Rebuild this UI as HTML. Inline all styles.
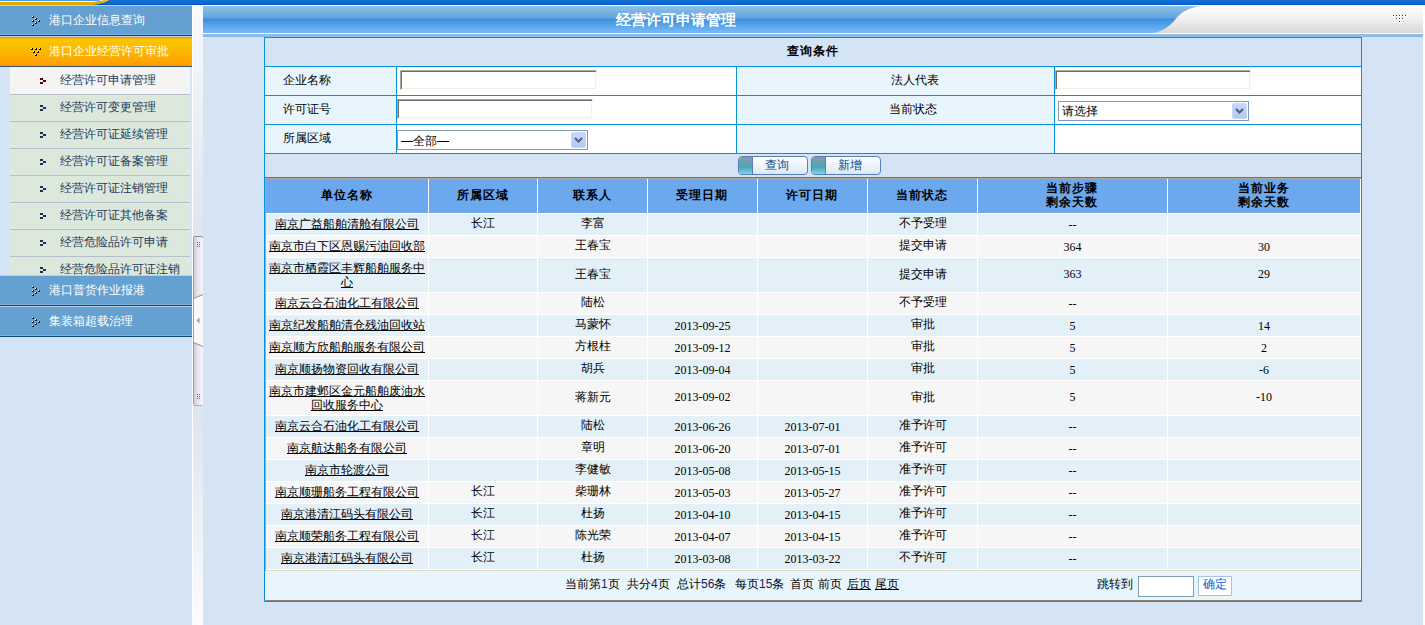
<!DOCTYPE html>
<html><head><meta charset="utf-8">
<style>
*{margin:0;padding:0;box-sizing:border-box}
html,body{width:1425px;height:625px;overflow:hidden}
body{position:relative;font-weight:500;background:#d4e4f4;font-family:"Liberation Sans",sans-serif;font-size:12px;color:#000}
.a{position:absolute}
/* top bar */
#topbar{left:0;top:0;width:1425px;height:5px;background:linear-gradient(#1470d2,#0a66d0 70%,#0055c8)}
#rstrip{left:1423px;top:5px;width:2px;height:620px;background:#fff}
/* sidebar */
#side{left:0;top:5px;width:192px;height:620px;background:#d4e4f4}
.mh{position:absolute;left:0;width:192px;height:31px;border-top:1px solid #c4ccd8;background:#64a0d0}
.mh:after{content:"";position:absolute;left:0;right:0;bottom:0;height:1px;border-top:1px solid #78b4e8;background:#10487e}
.mh .t{position:absolute;left:49px;top:0;line-height:28px;color:#fff;font-size:12px;white-space:nowrap}
.mh.or{border-top:1px solid #c8ccd0;background:linear-gradient(#f0a000 0,#f0a000 1px,#fcc600 2px,#fbb800 45%,#ff9c00 100%)}
.mh.or:after{height:1px;border-top:0;background:#404c64}
.sub{position:absolute;left:10px;width:180px;height:27px;background:#dce8dc;border-bottom:1px solid #b4c0cc}
.sub.sel{background:#f4f4f4}
.sub .t{position:absolute;left:50px;top:-1px;line-height:26px;color:#223a60;white-space:nowrap}
.sub i{position:absolute;left:30px;width:3px;height:2px;background:#1e2e50}
.sel i{background:#600000}
/* splitter */
#split{left:192px;top:5px;width:11px;height:620px;border-left:1px solid #fff;background:linear-gradient(#f8f9fc 0%,#dde5ee 38%,#dde5ee 66%,#fbfcfe 100%)}
/* title */
#title{left:203px;top:5px;width:1220px;height:32px;border-top:1px solid #fff;background:linear-gradient(#8ec0e6 0px,#62a6e0 12px,#3a90dc 13px,#58a6ec 20px,#78b8f8 26px,#78b8f8 27px,#fff 27px,#fff 28px,#8ec0e6 28px,#88bce4 31px)}
#ttext{left:616px;top:12px;width:122px;color:#fff;font-weight:bold;font-size:15px;line-height:16px;white-space:nowrap}
.c{display:flex;align-items:center;justify-content:center;text-align:center;white-space:nowrap}
.l{display:flex;align-items:center;white-space:nowrap}
.n{font-family:"Liberation Serif",serif}
.nb{color:#1a1a60}
u{text-decoration:underline}
</style></head>
<body>
<div id="topbar" class="a"></div>
<svg class="a" style="left:0;top:0" width="130" height="5" viewBox="0 0 130 5">
  <rect x="0" y="0" width="104" height="1" fill="#4a9ae0"/>
  <path d="M0 1 H94 Q99 0.8 102 0 H106 Q100 1.6 94 2 H0 Z" fill="#fff"/>
  <path d="M0 2 H94 Q101 1.6 106 0 H109 Q103 3.5 93 5 H0 Z" fill="#e0aa00"/>
  <path d="M101 1.2 Q104 0.4 106 0 H109 Q106 1.8 102 3 Z" fill="#f8c000"/>
</svg>

<div id="side" class="a"></div>
<div class="mh" style="top:5px"><svg class="a" style="left:32px;top:11px" width="10" height="10"></svg><span class="t">港口企业信息查询</span></div>
<div class="mh or" style="top:36px"><span class="t">港口企业经营许可审批</span></div>
<div class="a" style="left:0;top:67px;width:192px;height:208px;overflow:hidden"><div class="a" style="left:10px;top:0;width:180px;height:1px;background:#f4f4f4"></div>
  <div class="sub sel" style="top:1px"><i style="top:10px"></i><i style="left:33px;top:12px"></i><i style="top:14px"></i><span class="t">经营许可申请管理</span></div>
  <div class="sub" style="top:28px"><i style="top:10px"></i><i style="left:33px;top:12px"></i><i style="top:14px"></i><span class="t">经营许可变更管理</span></div>
  <div class="sub" style="top:55px"><i style="top:10px"></i><i style="left:33px;top:12px"></i><i style="top:14px"></i><span class="t">经营许可证延续管理</span></div>
  <div class="sub" style="top:82px"><i style="top:10px"></i><i style="left:33px;top:12px"></i><i style="top:14px"></i><span class="t">经营许可证备案管理</span></div>
  <div class="sub" style="top:109px"><i style="top:10px"></i><i style="left:33px;top:12px"></i><i style="top:14px"></i><span class="t">经营许可证注销管理</span></div>
  <div class="sub" style="top:136px"><i style="top:10px"></i><i style="left:33px;top:12px"></i><i style="top:14px"></i><span class="t">经营许可证其他备案</span></div>
  <div class="sub" style="top:163px"><i style="top:10px"></i><i style="left:33px;top:12px"></i><i style="top:14px"></i><span class="t">经营危险品许可申请</span></div>
  <div class="sub" style="top:190px"><i style="top:10px"></i><i style="left:33px;top:12px"></i><i style="top:14px"></i><span class="t">经营危险品许可证注销</span></div>
</div>
<div class="mh" style="top:275px"><span class="t">港口普货作业报港</span></div>
<div class="mh" style="top:306px"><span class="t">集装箱超载治理</span></div>

<div id="split" class="a"></div>

<div id="title" class="a"></div>
<div id="ttext" class="a">经营许可申请管理</div>
<div class="a" style="left:32px;top:16px;width:2px;height:2px;background:#141838"></div><div class="a" style="left:32px;top:16px;width:1px;height:1px;background:#fff"></div>
<div class="a" style="left:35px;top:18px;width:2px;height:2px;background:#141838"></div><div class="a" style="left:35px;top:18px;width:1px;height:1px;background:#fff"></div>
<div class="a" style="left:32px;top:20px;width:2px;height:2px;background:#141838"></div><div class="a" style="left:32px;top:20px;width:1px;height:1px;background:#fff"></div>
<div class="a" style="left:38px;top:20px;width:2px;height:2px;background:#141838"></div><div class="a" style="left:38px;top:20px;width:1px;height:1px;background:#fff"></div>
<div class="a" style="left:35px;top:22px;width:2px;height:2px;background:#141838"></div><div class="a" style="left:35px;top:22px;width:1px;height:1px;background:#fff"></div>
<div class="a" style="left:32px;top:24px;width:2px;height:2px;background:#141838"></div><div class="a" style="left:32px;top:24px;width:1px;height:1px;background:#fff"></div>
<div class="a" style="left:32px;top:286px;width:2px;height:2px;background:#141838"></div><div class="a" style="left:32px;top:286px;width:1px;height:1px;background:#fff"></div>
<div class="a" style="left:35px;top:288px;width:2px;height:2px;background:#141838"></div><div class="a" style="left:35px;top:288px;width:1px;height:1px;background:#fff"></div>
<div class="a" style="left:32px;top:290px;width:2px;height:2px;background:#141838"></div><div class="a" style="left:32px;top:290px;width:1px;height:1px;background:#fff"></div>
<div class="a" style="left:38px;top:290px;width:2px;height:2px;background:#141838"></div><div class="a" style="left:38px;top:290px;width:1px;height:1px;background:#fff"></div>
<div class="a" style="left:35px;top:292px;width:2px;height:2px;background:#141838"></div><div class="a" style="left:35px;top:292px;width:1px;height:1px;background:#fff"></div>
<div class="a" style="left:32px;top:294px;width:2px;height:2px;background:#141838"></div><div class="a" style="left:32px;top:294px;width:1px;height:1px;background:#fff"></div>
<div class="a" style="left:32px;top:317px;width:2px;height:2px;background:#141838"></div><div class="a" style="left:32px;top:317px;width:1px;height:1px;background:#fff"></div>
<div class="a" style="left:35px;top:319px;width:2px;height:2px;background:#141838"></div><div class="a" style="left:35px;top:319px;width:1px;height:1px;background:#fff"></div>
<div class="a" style="left:32px;top:321px;width:2px;height:2px;background:#141838"></div><div class="a" style="left:32px;top:321px;width:1px;height:1px;background:#fff"></div>
<div class="a" style="left:38px;top:321px;width:2px;height:2px;background:#141838"></div><div class="a" style="left:38px;top:321px;width:1px;height:1px;background:#fff"></div>
<div class="a" style="left:35px;top:323px;width:2px;height:2px;background:#141838"></div><div class="a" style="left:35px;top:323px;width:1px;height:1px;background:#fff"></div>
<div class="a" style="left:32px;top:325px;width:2px;height:2px;background:#141838"></div><div class="a" style="left:32px;top:325px;width:1px;height:1px;background:#fff"></div>
<div class="a" style="left:31px;top:48px;width:2px;height:2px;background:#000"></div><div class="a" style="left:31px;top:48px;width:1px;height:1px;background:#fff"></div>
<div class="a" style="left:35px;top:48px;width:2px;height:2px;background:#000"></div><div class="a" style="left:35px;top:48px;width:1px;height:1px;background:#fff"></div>
<div class="a" style="left:39px;top:48px;width:2px;height:2px;background:#000"></div><div class="a" style="left:39px;top:48px;width:1px;height:1px;background:#fff"></div>
<div class="a" style="left:33px;top:51px;width:2px;height:2px;background:#000"></div><div class="a" style="left:33px;top:51px;width:1px;height:1px;background:#fff"></div>
<div class="a" style="left:37px;top:51px;width:2px;height:2px;background:#000"></div><div class="a" style="left:37px;top:51px;width:1px;height:1px;background:#fff"></div>
<div class="a" style="left:35px;top:54px;width:2px;height:2px;background:#000"></div><div class="a" style="left:35px;top:54px;width:1px;height:1px;background:#fff"></div>
<svg class="a" style="left:203px;top:6px" width="1220" height="27" viewBox="0 0 1220 27"><defs><linearGradient id="gg" x1="0" y1="0" x2="0" y2="1"><stop offset="0" stop-color="#ffffff"/><stop offset="0.35" stop-color="#f4f4f4"/><stop offset="1" stop-color="#d9d9d9"/></linearGradient></defs><path d="M998.5 0 C991.5 0.5 980 4 973.5 12 C968 19.5 959.5 25.5 951 27 L1220 27 L1220 0 Z" fill="url(#gg)"/></svg>
<div class="a" style="left:1393px;top:15px;width:2px;height:2px;background:#fff"></div><div class="a" style="left:1393px;top:15px;width:1px;height:1px;background:#3a3a3a"></div>
<div class="a" style="left:1396px;top:15px;width:2px;height:2px;background:#fff"></div><div class="a" style="left:1396px;top:15px;width:1px;height:1px;background:#3a3a3a"></div>
<div class="a" style="left:1399px;top:15px;width:2px;height:2px;background:#fff"></div><div class="a" style="left:1399px;top:15px;width:1px;height:1px;background:#3a3a3a"></div>
<div class="a" style="left:1402px;top:15px;width:2px;height:2px;background:#fff"></div><div class="a" style="left:1402px;top:15px;width:1px;height:1px;background:#3a3a3a"></div>
<div class="a" style="left:1405px;top:15px;width:2px;height:2px;background:#fff"></div><div class="a" style="left:1405px;top:15px;width:1px;height:1px;background:#3a3a3a"></div>
<div class="a" style="left:1396px;top:18px;width:2px;height:2px;background:#fff"></div><div class="a" style="left:1396px;top:18px;width:1px;height:1px;background:#3a3a3a"></div>
<div class="a" style="left:1399px;top:18px;width:2px;height:2px;background:#fff"></div><div class="a" style="left:1399px;top:18px;width:1px;height:1px;background:#3a3a3a"></div>
<div class="a" style="left:1402px;top:18px;width:2px;height:2px;background:#fff"></div><div class="a" style="left:1402px;top:18px;width:1px;height:1px;background:#3a3a3a"></div>
<div class="a" style="left:1399px;top:21px;width:2px;height:2px;background:#fff"></div><div class="a" style="left:1399px;top:21px;width:1px;height:1px;background:#3a3a3a"></div>
<svg class="a" style="left:193px;top:230px" width="11" height="180" viewBox="0 0 11 180" shape-rendering="crispEdges"><defs><linearGradient id="kg" x1="0" y1="0" x2="1" y2="0"><stop offset="0" stop-color="#c6c4da"/><stop offset="0.45" stop-color="#e4e4ee"/><stop offset="1" stop-color="#f6f6fa"/></linearGradient></defs><path d="M0 9 Q0 6 5 6 Q10 6 10 8 L10 174 Q10 176 5 176 Q0 176 0 173 Z" fill="url(#kg)"/><path d="M1 68 L10 64 L10 117 L1 113 Z" fill="#f9f9fc"/><rect x="0" y="8" width="1" height="166" fill="#9c9ab8"/><rect x="1" y="6" width="8" height="1" fill="#8e8cac"/><rect x="0" y="7" width="1" height="1" fill="#8e8cac"/><rect x="9" y="7" width="1" height="1" fill="#8e8cac"/><rect x="1" y="175" width="8" height="1" fill="#a8a6c2"/></svg>
<svg class="a" style="left:193px;top:230px" width="11" height="180" viewBox="0 0 11 180"><path d="M0.5 68.5 L10 64.5 M0.5 112.5 L10 116.5" stroke="#8c8aa8" stroke-width="1" fill="none"/><path d="M3.5 90.5 L6.5 87.5 L6.5 93.5 Z" fill="#9896b4"/><rect x="4" y="12" width="1" height="1" fill="#6a6890"/><rect x="6" y="12" width="1" height="1" fill="#6a6890"/><rect x="4" y="14" width="1" height="1" fill="#6a6890"/><rect x="6" y="14" width="1" height="1" fill="#6a6890"/><rect x="4" y="16" width="1" height="1" fill="#6a6890"/><rect x="6" y="16" width="1" height="1" fill="#6a6890"/><rect x="4" y="164" width="1" height="1" fill="#6a6890"/><rect x="6" y="164" width="1" height="1" fill="#6a6890"/><rect x="4" y="166" width="1" height="1" fill="#6a6890"/><rect x="6" y="166" width="1" height="1" fill="#6a6890"/><rect x="4" y="168" width="1" height="1" fill="#6a6890"/><rect x="6" y="168" width="1" height="1" fill="#6a6890"/></svg>
<div class="a" style="left:264px;top:37px;width:1098px;height:565px;border:1px solid #0891d5;background:#d4e4f4"></div>
<div class="a c" style="left:265px;top:37px;width:1096px;height:28px;font-weight:bold;letter-spacing:1px;padding-right:1px"><div>查询条件</div></div>
<div class="a" style="left:265px;top:67px;width:131px;height:28px;background:#e8f5fd"></div>
<div class="a" style="left:397px;top:67px;width:339px;height:28px;background:#fff"></div>
<div class="a" style="left:737px;top:67px;width:317px;height:28px;background:#e8f5fd"></div>
<div class="a" style="left:1055px;top:67px;width:306px;height:28px;background:#fff"></div>
<div class="a" style="left:265px;top:96px;width:131px;height:28px;background:#e8f5fd"></div>
<div class="a" style="left:397px;top:96px;width:339px;height:28px;background:#fff"></div>
<div class="a" style="left:737px;top:96px;width:317px;height:28px;background:#e8f5fd"></div>
<div class="a" style="left:1055px;top:96px;width:306px;height:28px;background:#fff"></div>
<div class="a" style="left:265px;top:125px;width:131px;height:28px;background:#e8f5fd"></div>
<div class="a" style="left:397px;top:125px;width:339px;height:28px;background:#fff"></div>
<div class="a" style="left:737px;top:125px;width:317px;height:28px;background:#e8f5fd"></div>
<div class="a" style="left:1055px;top:125px;width:306px;height:28px;background:#fff"></div>
<div class="a" style="left:265px;top:66px;width:1096px;height:1px;background:#0891d5"></div>
<div class="a" style="left:265px;top:95px;width:1096px;height:1px;background:#0891d5"></div>
<div class="a" style="left:265px;top:124px;width:1096px;height:1px;background:#0891d5"></div>
<div class="a" style="left:265px;top:153px;width:1096px;height:1px;background:#0891d5"></div>
<div class="a" style="left:265px;top:177px;width:1096px;height:1px;background:#0891d5"></div>
<div class="a" style="left:396px;top:66px;width:1px;height:88px;background:#0891d5"></div>
<div class="a" style="left:736px;top:66px;width:1px;height:88px;background:#0891d5"></div>
<div class="a" style="left:1054px;top:66px;width:1px;height:88px;background:#0891d5"></div>
<div class="a l" style="left:283px;top:67px;width:100px;height:28px;padding-bottom:2px"><div>企业名称</div></div>
<div class="a l" style="left:283px;top:96px;width:100px;height:28px;padding-bottom:2px"><div>许可证号</div></div>
<div class="a l" style="left:283px;top:125px;width:100px;height:28px;padding-bottom:2px"><div>所属区域</div></div>
<div class="a l" style="left:891px;top:67px;width:100px;height:28px;padding-bottom:2px"><div>法人代表</div></div>
<div class="a l" style="left:889px;top:96px;width:100px;height:28px;padding-bottom:2px"><div>当前状态</div></div>
<div class="a" style="left:400px;top:70px;width:197px;height:20px;background:#fff;border-top:1px solid #aca899;border-left:1px solid #aca899;border-right:1px solid #fff;border-bottom:1px solid #fff;box-shadow:inset 1px 1px 0 #716f64,inset -1px -1px 0 #f1efe2"></div>
<div class="a" style="left:1055px;top:70px;width:196px;height:20px;background:#fff;border-top:1px solid #aca899;border-left:1px solid #aca899;border-right:1px solid #fff;border-bottom:1px solid #fff;box-shadow:inset 1px 1px 0 #716f64,inset -1px -1px 0 #f1efe2"></div>
<div class="a" style="left:397px;top:99px;width:196px;height:20px;background:#fff;border-top:1px solid #aca899;border-left:1px solid #aca899;border-right:1px solid #fff;border-bottom:1px solid #fff;box-shadow:inset 1px 1px 0 #716f64,inset -1px -1px 0 #f1efe2"></div>
<div class="a" style="left:397px;top:130px;width:191px;height:20px;background:#fff;border:1px solid #7f9db9"></div>
<div class="a l" style="left:401px;top:131px;width:171px;height:20px;"><div><span style="color:#000">—全部—</span></div></div>
<div class="a" style="left:571px;top:132px;width:15px;height:16px;border-radius:2px;background:linear-gradient(#c6d6fc,#b4c8f4);border:1px solid #c8d8f8"></div>
<svg class="a" style="left:571px;top:132px" width="15" height="16"><path d="M4 6.0 L7.5 9.5 L11 6.0" stroke="#4d6185" stroke-width="2" fill="none"/></svg>
<div class="a" style="left:1058px;top:101px;width:191px;height:20px;background:#fff;border:1px solid #7f9db9"></div>
<div class="a l" style="left:1062px;top:101px;width:171px;height:20px;"><div>请选择</div></div>
<div class="a" style="left:1232px;top:103px;width:15px;height:16px;border-radius:2px;background:linear-gradient(#c6d6fc,#b4c8f4);border:1px solid #c8d8f8"></div>
<svg class="a" style="left:1232px;top:103px" width="15" height="16"><path d="M4 6.0 L7.5 9.5 L11 6.0" stroke="#4d6185" stroke-width="2" fill="none"/></svg>
<div class="a" style="left:738px;top:156px;width:70px;height:19px;border:1px solid #5a7cc0;border-radius:4px;overflow:hidden;background:linear-gradient(#ffffff,#dde8f6)"><div class="a" style="left:0;top:0;width:14px;height:100%;background:linear-gradient(#8a9aa6,#4aa8b8 60%,#78d8e8);border-right:1px solid #5a7cc0"></div><div class="a c" style="left:8px;top:0;right:0;height:100%;color:#0c4c84;padding-bottom:1px"><div>查询</div></div></div>
<div class="a" style="left:811px;top:156px;width:70px;height:19px;border:1px solid #5a7cc0;border-radius:4px;overflow:hidden;background:linear-gradient(#ffffff,#dde8f6)"><div class="a" style="left:0;top:0;width:14px;height:100%;background:linear-gradient(#8a9aa6,#4aa8b8 60%,#78d8e8);border-right:1px solid #5a7cc0"></div><div class="a c" style="left:8px;top:0;right:0;height:100%;color:#0c4c84;padding-bottom:1px"><div>新增</div></div></div>
<div class="a" style="left:265px;top:178px;width:1096px;height:393px;background:#fff;border-left:1px solid #b0a898;border-top:1px solid #b0a898;border-bottom:1px solid #e4dcc8"></div>
<div class="a" style="left:266px;top:179px;width:162px;height:34px;background:#6ca8ee"></div>
<div class="a c" style="left:266px;top:179px;width:162px;height:34px;font-weight:bold;letter-spacing:1px;padding-right:1px;line-height:14px;padding-bottom:2px"><div>单位名称</div></div>
<div class="a" style="left:429px;top:179px;width:108px;height:34px;background:#6ca8ee"></div>
<div class="a c" style="left:429px;top:179px;width:108px;height:34px;font-weight:bold;letter-spacing:1px;padding-right:1px;line-height:14px;padding-bottom:2px"><div>所属区域</div></div>
<div class="a" style="left:538px;top:179px;width:109px;height:34px;background:#6ca8ee"></div>
<div class="a c" style="left:538px;top:179px;width:109px;height:34px;font-weight:bold;letter-spacing:1px;padding-right:1px;line-height:14px;padding-bottom:2px"><div>联系人</div></div>
<div class="a" style="left:648px;top:179px;width:109px;height:34px;background:#6ca8ee"></div>
<div class="a c" style="left:648px;top:179px;width:109px;height:34px;font-weight:bold;letter-spacing:1px;padding-right:1px;line-height:14px;padding-bottom:2px"><div>受理日期</div></div>
<div class="a" style="left:758px;top:179px;width:109px;height:34px;background:#6ca8ee"></div>
<div class="a c" style="left:758px;top:179px;width:109px;height:34px;font-weight:bold;letter-spacing:1px;padding-right:1px;line-height:14px;padding-bottom:2px"><div>许可日期</div></div>
<div class="a" style="left:868px;top:179px;width:109px;height:34px;background:#6ca8ee"></div>
<div class="a c" style="left:868px;top:179px;width:109px;height:34px;font-weight:bold;letter-spacing:1px;padding-right:1px;line-height:14px;padding-bottom:2px"><div>当前状态</div></div>
<div class="a" style="left:978px;top:179px;width:189px;height:34px;background:#6ca8ee"></div>
<div class="a c" style="left:978px;top:179px;width:189px;height:34px;font-weight:bold;letter-spacing:1px;padding-right:1px;line-height:14px;padding-bottom:2px"><div>当前步骤<br>剩余天数</div></div>
<div class="a" style="left:1168px;top:179px;width:192px;height:34px;background:#6ca8ee"></div>
<div class="a c" style="left:1168px;top:179px;width:192px;height:34px;font-weight:bold;letter-spacing:1px;padding-right:1px;line-height:14px;padding-bottom:2px"><div>当前业务<br>剩余天数</div></div>
<div class="a" style="left:266px;top:214px;width:162px;height:21px;background:#e3f0f8"></div>
<div class="a c" style="left:266px;top:214px;width:162px;height:21px;line-height:14px;padding-bottom:2px"><div><u>南京广益船舶清舱有限公司</u></div></div>
<div class="a" style="left:429px;top:214px;width:108px;height:21px;background:#e3f0f8"></div>
<div class="a c" style="left:429px;top:214px;width:108px;height:21px;padding-bottom:2px"><div>长江</div></div>
<div class="a" style="left:538px;top:214px;width:109px;height:21px;background:#e3f0f8"></div>
<div class="a c" style="left:538px;top:214px;width:109px;height:21px;padding-bottom:2px"><div>李富</div></div>
<div class="a" style="left:648px;top:214px;width:109px;height:21px;background:#e3f0f8"></div>
<div class="a" style="left:758px;top:214px;width:109px;height:21px;background:#e3f0f8"></div>
<div class="a" style="left:868px;top:214px;width:109px;height:21px;background:#e3f0f8"></div>
<div class="a c" style="left:868px;top:214px;width:109px;height:21px;padding-bottom:2px"><div>不予受理</div></div>
<div class="a" style="left:978px;top:214px;width:189px;height:21px;background:#e3f0f8"></div>
<div class="a c n" style="left:978px;top:214px;width:189px;height:21px;padding-top:2px"><div>--</div></div>
<div class="a" style="left:1168px;top:214px;width:192px;height:21px;background:#e3f0f8"></div>
<div class="a" style="left:266px;top:236px;width:162px;height:21px;background:#f6f6f6"></div>
<div class="a c" style="left:266px;top:236px;width:162px;height:21px;line-height:14px;padding-bottom:2px"><div><u>南京市白下区恩赐污油回收部</u></div></div>
<div class="a" style="left:429px;top:236px;width:108px;height:21px;background:#f6f6f6"></div>
<div class="a" style="left:538px;top:236px;width:109px;height:21px;background:#f6f6f6"></div>
<div class="a c" style="left:538px;top:236px;width:109px;height:21px;padding-bottom:2px"><div>王春宝</div></div>
<div class="a" style="left:648px;top:236px;width:109px;height:21px;background:#f6f6f6"></div>
<div class="a" style="left:758px;top:236px;width:109px;height:21px;background:#f6f6f6"></div>
<div class="a" style="left:868px;top:236px;width:109px;height:21px;background:#f6f6f6"></div>
<div class="a c" style="left:868px;top:236px;width:109px;height:21px;padding-bottom:2px"><div>提交申请</div></div>
<div class="a" style="left:978px;top:236px;width:189px;height:21px;background:#f6f6f6"></div>
<div class="a c n" style="left:978px;top:236px;width:189px;height:21px;padding-top:2px"><div>364</div></div>
<div class="a" style="left:1168px;top:236px;width:192px;height:21px;background:#f6f6f6"></div>
<div class="a c n" style="left:1168px;top:236px;width:192px;height:21px;padding-top:2px"><div>30</div></div>
<div class="a" style="left:266px;top:258px;width:162px;height:34px;background:#e3f0f8"></div>
<div class="a c" style="left:266px;top:258px;width:162px;height:34px;line-height:14px"><div><u>南京市栖霞区丰辉船舶服务中</u><br><u>心</u></div></div>
<div class="a" style="left:429px;top:258px;width:108px;height:34px;background:#e3f0f8"></div>
<div class="a" style="left:538px;top:258px;width:109px;height:34px;background:#e3f0f8"></div>
<div class="a c" style="left:538px;top:258px;width:109px;height:34px;padding-bottom:2px"><div>王春宝</div></div>
<div class="a" style="left:648px;top:258px;width:109px;height:34px;background:#e3f0f8"></div>
<div class="a" style="left:758px;top:258px;width:109px;height:34px;background:#e3f0f8"></div>
<div class="a" style="left:868px;top:258px;width:109px;height:34px;background:#e3f0f8"></div>
<div class="a c" style="left:868px;top:258px;width:109px;height:34px;padding-bottom:2px"><div>提交申请</div></div>
<div class="a" style="left:978px;top:258px;width:189px;height:34px;background:#e3f0f8"></div>
<div class="a c n" style="left:978px;top:258px;width:189px;height:34px;padding-bottom:2px"><div>363</div></div>
<div class="a" style="left:1168px;top:258px;width:192px;height:34px;background:#e3f0f8"></div>
<div class="a c n" style="left:1168px;top:258px;width:192px;height:34px;padding-bottom:2px"><div>29</div></div>
<div class="a" style="left:266px;top:293px;width:162px;height:21px;background:#f6f6f6"></div>
<div class="a c" style="left:266px;top:293px;width:162px;height:21px;line-height:14px;padding-bottom:2px"><div><u>南京云合石油化工有限公司</u></div></div>
<div class="a" style="left:429px;top:293px;width:108px;height:21px;background:#f6f6f6"></div>
<div class="a" style="left:538px;top:293px;width:109px;height:21px;background:#f6f6f6"></div>
<div class="a c" style="left:538px;top:293px;width:109px;height:21px;padding-bottom:2px"><div>陆松</div></div>
<div class="a" style="left:648px;top:293px;width:109px;height:21px;background:#f6f6f6"></div>
<div class="a" style="left:758px;top:293px;width:109px;height:21px;background:#f6f6f6"></div>
<div class="a" style="left:868px;top:293px;width:109px;height:21px;background:#f6f6f6"></div>
<div class="a c" style="left:868px;top:293px;width:109px;height:21px;padding-bottom:2px"><div>不予受理</div></div>
<div class="a" style="left:978px;top:293px;width:189px;height:21px;background:#f6f6f6"></div>
<div class="a c n" style="left:978px;top:293px;width:189px;height:21px;padding-top:2px"><div>--</div></div>
<div class="a" style="left:1168px;top:293px;width:192px;height:21px;background:#f6f6f6"></div>
<div class="a" style="left:266px;top:315px;width:162px;height:21px;background:#e3f0f8"></div>
<div class="a c" style="left:266px;top:315px;width:162px;height:21px;line-height:14px;padding-bottom:2px"><div><u>南京纪发船舶清仓残油回收站</u></div></div>
<div class="a" style="left:429px;top:315px;width:108px;height:21px;background:#e3f0f8"></div>
<div class="a" style="left:538px;top:315px;width:109px;height:21px;background:#e3f0f8"></div>
<div class="a c" style="left:538px;top:315px;width:109px;height:21px;padding-bottom:2px"><div>马蒙怀</div></div>
<div class="a" style="left:648px;top:315px;width:109px;height:21px;background:#e3f0f8"></div>
<div class="a c n" style="left:648px;top:315px;width:109px;height:21px;padding-top:2px"><div>2013-09-25</div></div>
<div class="a" style="left:758px;top:315px;width:109px;height:21px;background:#e3f0f8"></div>
<div class="a" style="left:868px;top:315px;width:109px;height:21px;background:#e3f0f8"></div>
<div class="a c" style="left:868px;top:315px;width:109px;height:21px;padding-bottom:2px"><div>审批</div></div>
<div class="a" style="left:978px;top:315px;width:189px;height:21px;background:#e3f0f8"></div>
<div class="a c n" style="left:978px;top:315px;width:189px;height:21px;padding-top:2px"><div>5</div></div>
<div class="a" style="left:1168px;top:315px;width:192px;height:21px;background:#e3f0f8"></div>
<div class="a c n" style="left:1168px;top:315px;width:192px;height:21px;padding-top:2px"><div>14</div></div>
<div class="a" style="left:266px;top:337px;width:162px;height:21px;background:#f6f6f6"></div>
<div class="a c" style="left:266px;top:337px;width:162px;height:21px;line-height:14px;padding-bottom:2px"><div><u>南京顺方欣船舶服务有限公司</u></div></div>
<div class="a" style="left:429px;top:337px;width:108px;height:21px;background:#f6f6f6"></div>
<div class="a" style="left:538px;top:337px;width:109px;height:21px;background:#f6f6f6"></div>
<div class="a c" style="left:538px;top:337px;width:109px;height:21px;padding-bottom:2px"><div>方根柱</div></div>
<div class="a" style="left:648px;top:337px;width:109px;height:21px;background:#f6f6f6"></div>
<div class="a c n" style="left:648px;top:337px;width:109px;height:21px;padding-top:2px"><div>2013-09-12</div></div>
<div class="a" style="left:758px;top:337px;width:109px;height:21px;background:#f6f6f6"></div>
<div class="a" style="left:868px;top:337px;width:109px;height:21px;background:#f6f6f6"></div>
<div class="a c" style="left:868px;top:337px;width:109px;height:21px;padding-bottom:2px"><div>审批</div></div>
<div class="a" style="left:978px;top:337px;width:189px;height:21px;background:#f6f6f6"></div>
<div class="a c n" style="left:978px;top:337px;width:189px;height:21px;padding-top:2px"><div>5</div></div>
<div class="a" style="left:1168px;top:337px;width:192px;height:21px;background:#f6f6f6"></div>
<div class="a c n" style="left:1168px;top:337px;width:192px;height:21px;padding-top:2px"><div>2</div></div>
<div class="a" style="left:266px;top:359px;width:162px;height:21px;background:#e3f0f8"></div>
<div class="a c" style="left:266px;top:359px;width:162px;height:21px;line-height:14px;padding-bottom:2px"><div><u>南京顺扬物资回收有限公司</u></div></div>
<div class="a" style="left:429px;top:359px;width:108px;height:21px;background:#e3f0f8"></div>
<div class="a" style="left:538px;top:359px;width:109px;height:21px;background:#e3f0f8"></div>
<div class="a c" style="left:538px;top:359px;width:109px;height:21px;padding-bottom:2px"><div>胡兵</div></div>
<div class="a" style="left:648px;top:359px;width:109px;height:21px;background:#e3f0f8"></div>
<div class="a c n" style="left:648px;top:359px;width:109px;height:21px;padding-top:2px"><div>2013-09-04</div></div>
<div class="a" style="left:758px;top:359px;width:109px;height:21px;background:#e3f0f8"></div>
<div class="a" style="left:868px;top:359px;width:109px;height:21px;background:#e3f0f8"></div>
<div class="a c" style="left:868px;top:359px;width:109px;height:21px;padding-bottom:2px"><div>审批</div></div>
<div class="a" style="left:978px;top:359px;width:189px;height:21px;background:#e3f0f8"></div>
<div class="a c n" style="left:978px;top:359px;width:189px;height:21px;padding-top:2px"><div>5</div></div>
<div class="a" style="left:1168px;top:359px;width:192px;height:21px;background:#e3f0f8"></div>
<div class="a c n" style="left:1168px;top:359px;width:192px;height:21px;padding-top:2px"><div>-6</div></div>
<div class="a" style="left:266px;top:381px;width:162px;height:34px;background:#f6f6f6"></div>
<div class="a c" style="left:266px;top:381px;width:162px;height:34px;line-height:14px"><div><u>南京市建邺区金元船舶废油水</u><br><u>回收服务中心</u></div></div>
<div class="a" style="left:429px;top:381px;width:108px;height:34px;background:#f6f6f6"></div>
<div class="a" style="left:538px;top:381px;width:109px;height:34px;background:#f6f6f6"></div>
<div class="a c" style="left:538px;top:381px;width:109px;height:34px;padding-bottom:2px"><div>蒋新元</div></div>
<div class="a" style="left:648px;top:381px;width:109px;height:34px;background:#f6f6f6"></div>
<div class="a c n" style="left:648px;top:381px;width:109px;height:34px;padding-bottom:2px"><div>2013-09-02</div></div>
<div class="a" style="left:758px;top:381px;width:109px;height:34px;background:#f6f6f6"></div>
<div class="a" style="left:868px;top:381px;width:109px;height:34px;background:#f6f6f6"></div>
<div class="a c" style="left:868px;top:381px;width:109px;height:34px;padding-bottom:2px"><div>审批</div></div>
<div class="a" style="left:978px;top:381px;width:189px;height:34px;background:#f6f6f6"></div>
<div class="a c n" style="left:978px;top:381px;width:189px;height:34px;padding-bottom:2px"><div>5</div></div>
<div class="a" style="left:1168px;top:381px;width:192px;height:34px;background:#f6f6f6"></div>
<div class="a c n" style="left:1168px;top:381px;width:192px;height:34px;padding-bottom:2px"><div>-10</div></div>
<div class="a" style="left:266px;top:416px;width:162px;height:21px;background:#e3f0f8"></div>
<div class="a c" style="left:266px;top:416px;width:162px;height:21px;line-height:14px;padding-bottom:2px"><div><u>南京云合石油化工有限公司</u></div></div>
<div class="a" style="left:429px;top:416px;width:108px;height:21px;background:#e3f0f8"></div>
<div class="a" style="left:538px;top:416px;width:109px;height:21px;background:#e3f0f8"></div>
<div class="a c" style="left:538px;top:416px;width:109px;height:21px;padding-bottom:2px"><div>陆松</div></div>
<div class="a" style="left:648px;top:416px;width:109px;height:21px;background:#e3f0f8"></div>
<div class="a c n" style="left:648px;top:416px;width:109px;height:21px;padding-top:2px"><div>2013-06-26</div></div>
<div class="a" style="left:758px;top:416px;width:109px;height:21px;background:#e3f0f8"></div>
<div class="a c n" style="left:758px;top:416px;width:109px;height:21px;padding-top:2px"><div>2013-07-01</div></div>
<div class="a" style="left:868px;top:416px;width:109px;height:21px;background:#e3f0f8"></div>
<div class="a c" style="left:868px;top:416px;width:109px;height:21px;padding-bottom:2px"><div>准予许可</div></div>
<div class="a" style="left:978px;top:416px;width:189px;height:21px;background:#e3f0f8"></div>
<div class="a c n" style="left:978px;top:416px;width:189px;height:21px;padding-top:2px"><div>--</div></div>
<div class="a" style="left:1168px;top:416px;width:192px;height:21px;background:#e3f0f8"></div>
<div class="a" style="left:266px;top:438px;width:162px;height:21px;background:#f6f6f6"></div>
<div class="a c" style="left:266px;top:438px;width:162px;height:21px;line-height:14px;padding-bottom:2px"><div><u>南京航达船务有限公司</u></div></div>
<div class="a" style="left:429px;top:438px;width:108px;height:21px;background:#f6f6f6"></div>
<div class="a" style="left:538px;top:438px;width:109px;height:21px;background:#f6f6f6"></div>
<div class="a c" style="left:538px;top:438px;width:109px;height:21px;padding-bottom:2px"><div>章明</div></div>
<div class="a" style="left:648px;top:438px;width:109px;height:21px;background:#f6f6f6"></div>
<div class="a c n" style="left:648px;top:438px;width:109px;height:21px;padding-top:2px"><div>2013-06-20</div></div>
<div class="a" style="left:758px;top:438px;width:109px;height:21px;background:#f6f6f6"></div>
<div class="a c n" style="left:758px;top:438px;width:109px;height:21px;padding-top:2px"><div>2013-07-01</div></div>
<div class="a" style="left:868px;top:438px;width:109px;height:21px;background:#f6f6f6"></div>
<div class="a c" style="left:868px;top:438px;width:109px;height:21px;padding-bottom:2px"><div>准予许可</div></div>
<div class="a" style="left:978px;top:438px;width:189px;height:21px;background:#f6f6f6"></div>
<div class="a c n" style="left:978px;top:438px;width:189px;height:21px;padding-top:2px"><div>--</div></div>
<div class="a" style="left:1168px;top:438px;width:192px;height:21px;background:#f6f6f6"></div>
<div class="a" style="left:266px;top:460px;width:162px;height:21px;background:#e3f0f8"></div>
<div class="a c" style="left:266px;top:460px;width:162px;height:21px;line-height:14px;padding-bottom:2px"><div><u>南京市轮渡公司</u></div></div>
<div class="a" style="left:429px;top:460px;width:108px;height:21px;background:#e3f0f8"></div>
<div class="a" style="left:538px;top:460px;width:109px;height:21px;background:#e3f0f8"></div>
<div class="a c" style="left:538px;top:460px;width:109px;height:21px;padding-bottom:2px"><div>李健敏</div></div>
<div class="a" style="left:648px;top:460px;width:109px;height:21px;background:#e3f0f8"></div>
<div class="a c n" style="left:648px;top:460px;width:109px;height:21px;padding-top:2px"><div>2013-05-08</div></div>
<div class="a" style="left:758px;top:460px;width:109px;height:21px;background:#e3f0f8"></div>
<div class="a c n" style="left:758px;top:460px;width:109px;height:21px;padding-top:2px"><div>2013-05-15</div></div>
<div class="a" style="left:868px;top:460px;width:109px;height:21px;background:#e3f0f8"></div>
<div class="a c" style="left:868px;top:460px;width:109px;height:21px;padding-bottom:2px"><div>准予许可</div></div>
<div class="a" style="left:978px;top:460px;width:189px;height:21px;background:#e3f0f8"></div>
<div class="a c n" style="left:978px;top:460px;width:189px;height:21px;padding-top:2px"><div>--</div></div>
<div class="a" style="left:1168px;top:460px;width:192px;height:21px;background:#e3f0f8"></div>
<div class="a" style="left:266px;top:482px;width:162px;height:21px;background:#f6f6f6"></div>
<div class="a c" style="left:266px;top:482px;width:162px;height:21px;line-height:14px;padding-bottom:2px"><div><u>南京顺珊船务工程有限公司</u></div></div>
<div class="a" style="left:429px;top:482px;width:108px;height:21px;background:#f6f6f6"></div>
<div class="a c" style="left:429px;top:482px;width:108px;height:21px;padding-bottom:2px"><div>长江</div></div>
<div class="a" style="left:538px;top:482px;width:109px;height:21px;background:#f6f6f6"></div>
<div class="a c" style="left:538px;top:482px;width:109px;height:21px;padding-bottom:2px"><div>柴珊林</div></div>
<div class="a" style="left:648px;top:482px;width:109px;height:21px;background:#f6f6f6"></div>
<div class="a c n" style="left:648px;top:482px;width:109px;height:21px;padding-top:2px"><div>2013-05-03</div></div>
<div class="a" style="left:758px;top:482px;width:109px;height:21px;background:#f6f6f6"></div>
<div class="a c n" style="left:758px;top:482px;width:109px;height:21px;padding-top:2px"><div>2013-05-27</div></div>
<div class="a" style="left:868px;top:482px;width:109px;height:21px;background:#f6f6f6"></div>
<div class="a c" style="left:868px;top:482px;width:109px;height:21px;padding-bottom:2px"><div>准予许可</div></div>
<div class="a" style="left:978px;top:482px;width:189px;height:21px;background:#f6f6f6"></div>
<div class="a c n" style="left:978px;top:482px;width:189px;height:21px;padding-top:2px"><div>--</div></div>
<div class="a" style="left:1168px;top:482px;width:192px;height:21px;background:#f6f6f6"></div>
<div class="a" style="left:266px;top:504px;width:162px;height:21px;background:#e3f0f8"></div>
<div class="a c" style="left:266px;top:504px;width:162px;height:21px;line-height:14px;padding-bottom:2px"><div><u>南京港清江码头有限公司</u></div></div>
<div class="a" style="left:429px;top:504px;width:108px;height:21px;background:#e3f0f8"></div>
<div class="a c" style="left:429px;top:504px;width:108px;height:21px;padding-bottom:2px"><div>长江</div></div>
<div class="a" style="left:538px;top:504px;width:109px;height:21px;background:#e3f0f8"></div>
<div class="a c" style="left:538px;top:504px;width:109px;height:21px;padding-bottom:2px"><div>杜扬</div></div>
<div class="a" style="left:648px;top:504px;width:109px;height:21px;background:#e3f0f8"></div>
<div class="a c n" style="left:648px;top:504px;width:109px;height:21px;padding-top:2px"><div>2013-04-10</div></div>
<div class="a" style="left:758px;top:504px;width:109px;height:21px;background:#e3f0f8"></div>
<div class="a c n" style="left:758px;top:504px;width:109px;height:21px;padding-top:2px"><div>2013-04-15</div></div>
<div class="a" style="left:868px;top:504px;width:109px;height:21px;background:#e3f0f8"></div>
<div class="a c" style="left:868px;top:504px;width:109px;height:21px;padding-bottom:2px"><div>准予许可</div></div>
<div class="a" style="left:978px;top:504px;width:189px;height:21px;background:#e3f0f8"></div>
<div class="a c n" style="left:978px;top:504px;width:189px;height:21px;padding-top:2px"><div>--</div></div>
<div class="a" style="left:1168px;top:504px;width:192px;height:21px;background:#e3f0f8"></div>
<div class="a" style="left:266px;top:526px;width:162px;height:21px;background:#f6f6f6"></div>
<div class="a c" style="left:266px;top:526px;width:162px;height:21px;line-height:14px;padding-bottom:2px"><div><u>南京顺荣船务工程有限公司</u></div></div>
<div class="a" style="left:429px;top:526px;width:108px;height:21px;background:#f6f6f6"></div>
<div class="a c" style="left:429px;top:526px;width:108px;height:21px;padding-bottom:2px"><div>长江</div></div>
<div class="a" style="left:538px;top:526px;width:109px;height:21px;background:#f6f6f6"></div>
<div class="a c" style="left:538px;top:526px;width:109px;height:21px;padding-bottom:2px"><div>陈光荣</div></div>
<div class="a" style="left:648px;top:526px;width:109px;height:21px;background:#f6f6f6"></div>
<div class="a c n" style="left:648px;top:526px;width:109px;height:21px;padding-top:2px"><div>2013-04-07</div></div>
<div class="a" style="left:758px;top:526px;width:109px;height:21px;background:#f6f6f6"></div>
<div class="a c n" style="left:758px;top:526px;width:109px;height:21px;padding-top:2px"><div>2013-04-15</div></div>
<div class="a" style="left:868px;top:526px;width:109px;height:21px;background:#f6f6f6"></div>
<div class="a c" style="left:868px;top:526px;width:109px;height:21px;padding-bottom:2px"><div>准予许可</div></div>
<div class="a" style="left:978px;top:526px;width:189px;height:21px;background:#f6f6f6"></div>
<div class="a c n" style="left:978px;top:526px;width:189px;height:21px;padding-top:2px"><div>--</div></div>
<div class="a" style="left:1168px;top:526px;width:192px;height:21px;background:#f6f6f6"></div>
<div class="a" style="left:266px;top:548px;width:162px;height:21px;background:#e3f0f8"></div>
<div class="a c" style="left:266px;top:548px;width:162px;height:21px;line-height:14px;padding-bottom:2px"><div><u>南京港清江码头有限公司</u></div></div>
<div class="a" style="left:429px;top:548px;width:108px;height:21px;background:#e3f0f8"></div>
<div class="a c" style="left:429px;top:548px;width:108px;height:21px;padding-bottom:2px"><div>长江</div></div>
<div class="a" style="left:538px;top:548px;width:109px;height:21px;background:#e3f0f8"></div>
<div class="a c" style="left:538px;top:548px;width:109px;height:21px;padding-bottom:2px"><div>杜扬</div></div>
<div class="a" style="left:648px;top:548px;width:109px;height:21px;background:#e3f0f8"></div>
<div class="a c n" style="left:648px;top:548px;width:109px;height:21px;padding-top:2px"><div>2013-03-08</div></div>
<div class="a" style="left:758px;top:548px;width:109px;height:21px;background:#e3f0f8"></div>
<div class="a c n" style="left:758px;top:548px;width:109px;height:21px;padding-top:2px"><div>2013-03-22</div></div>
<div class="a" style="left:868px;top:548px;width:109px;height:21px;background:#e3f0f8"></div>
<div class="a c" style="left:868px;top:548px;width:109px;height:21px;padding-bottom:2px"><div>不予许可</div></div>
<div class="a" style="left:978px;top:548px;width:189px;height:21px;background:#e3f0f8"></div>
<div class="a c n" style="left:978px;top:548px;width:189px;height:21px;padding-top:2px"><div>--</div></div>
<div class="a" style="left:1168px;top:548px;width:192px;height:21px;background:#e3f0f8"></div>
<div class="a" style="left:265px;top:571px;width:1096px;height:30px;background:#e8f5fd;border-bottom:1px solid #8a8274;border-left:1px solid #fff8ee"></div>
<div class="a l" style="left:565px;top:571px;width:80px;height:28px;padding-bottom:2px"><div>当前第<span class="nb">1</span>页</div></div>
<div class="a l" style="left:627px;top:571px;width:80px;height:28px;padding-bottom:2px"><div>共分<span class="nb">4</span>页</div></div>
<div class="a l" style="left:677px;top:571px;width:80px;height:28px;padding-bottom:2px"><div>总计<span class="nb">56</span>条</div></div>
<div class="a l" style="left:735px;top:571px;width:80px;height:28px;padding-bottom:2px"><div>每页<span class="nb">15</span>条</div></div>
<div class="a l" style="left:790px;top:571px;width:80px;height:28px;padding-bottom:2px"><div>首页</div></div>
<div class="a l" style="left:818px;top:571px;width:80px;height:28px;padding-bottom:2px"><div>前页</div></div>
<div class="a l" style="left:847px;top:571px;width:80px;height:28px;padding-bottom:2px"><div><u>后页</u></div></div>
<div class="a l" style="left:875px;top:571px;width:80px;height:28px;padding-bottom:2px"><div><u>尾页</u></div></div>
<div class="a l" style="left:1097px;top:571px;width:40px;height:28px;padding-bottom:2px"><div>跳转到</div></div>
<div class="a" style="left:1138px;top:576px;width:56px;height:21px;background:#fff;border:1px solid #7f9db9"></div>
<div class="a c" style="left:1198px;top:576px;width:34px;height:20px;background:#fff;border:1px solid #a6c4e6;color:#1060d0;padding-bottom:3px"><div>确定</div></div>
<div id="rstrip" class="a"></div>

</body></html>
